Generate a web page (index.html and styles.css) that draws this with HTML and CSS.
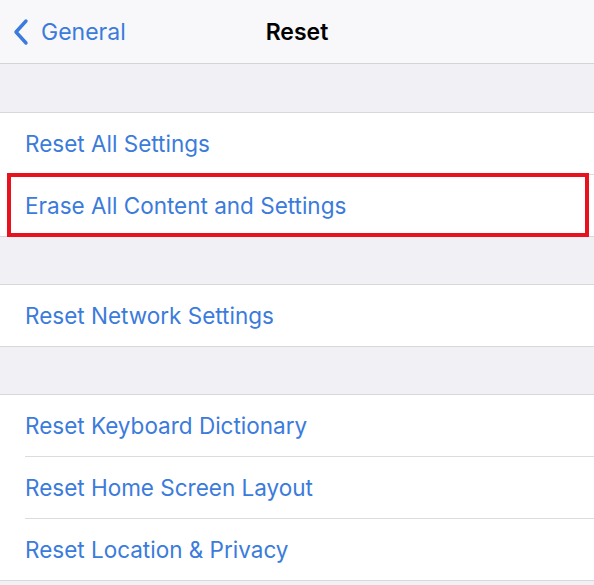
FILE: index.html
```html
<!DOCTYPE html>
<html>
<head>
<meta charset="utf-8">
<link rel="stylesheet" href="styles.css">
</head>
<body>
<div class="screen">
  <header class="nav">
    <div class="back">
      <svg class="chev" width="18" height="28" viewBox="0 0 18 28"><path d="M14 3 L4 14 L14 25" fill="none" stroke="#3a7bdc" stroke-width="3.4" stroke-linecap="round" stroke-linejoin="round"/></svg>
      <span class="back-label">General</span>
    </div>
    <div class="title">Reset</div>
  </header>
  <div class="gap first"></div>
  <div class="group">
    <div class="row">Reset All Settings</div>
    <div class="row highlight">Erase All Content and Settings</div>
  </div>
  <div class="gap"></div>
  <div class="group">
    <div class="row">Reset Network Settings</div>
  </div>
  <div class="gap"></div>
  <div class="group">
    <div class="row">Reset Keyboard Dictionary</div>
    <div class="row">Reset Home Screen Layout</div>
    <div class="row">Reset Location &amp; Privacy</div>
  </div>
  <div class="gap tail"></div>
</div>
</body>
</html>
```
FILE: styles.css
```css
html, body {
  margin: 0;
  padding: 0;
  background: #f0f0f5;
}
.screen {
  width: 594px;
  height: 585px;
  overflow: hidden;
  font-family: Inter, "Noto Sans", sans-serif;
  background: #f0f0f5;
}
.nav {
  height: 63px;
  background: #f8f8fa;
  border-bottom: 1px solid #d4d4d8;
  display: flex;
  align-items: center;
  justify-content: center;
  position: relative;
}
.back {
  position: absolute;
  left: 12px;
  top: 1px;
  bottom: 0;
  display: flex;
  align-items: center;
  gap: 11px;
}
.chev { display: block; }
.back-label {
  color: #3a7bdc;
  font-size: 23px;
}
.title {
  font-size: 23px;
  font-weight: 600;
  color: #000;
  padding-top: 1px;
}
.gap {
  height: 47px;
  border-bottom: 1px solid #d8d8dc;
}
.gap.first { height: 48px; }
.gap.tail { height: 10px; border-bottom: none; }
.group {
  background: #fff;
  border-bottom: 1px solid #d8d8dc;
}
.row {
  height: 61px;
  margin-left: 25px;
  display: flex;
  align-items: center;
  color: #3a7bdc;
  font-size: 22.5px;
  border-bottom: 1px solid #dcdce0;
}
.row:last-child { border-bottom: none; }
.highlight {
  position: relative;
}
.highlight::after {
  content: "";
  position: absolute;
  left: -18px;
  right: 5px;
  top: -2px;
  bottom: -1px;
  border: 4px solid #e8121f;
}
```
